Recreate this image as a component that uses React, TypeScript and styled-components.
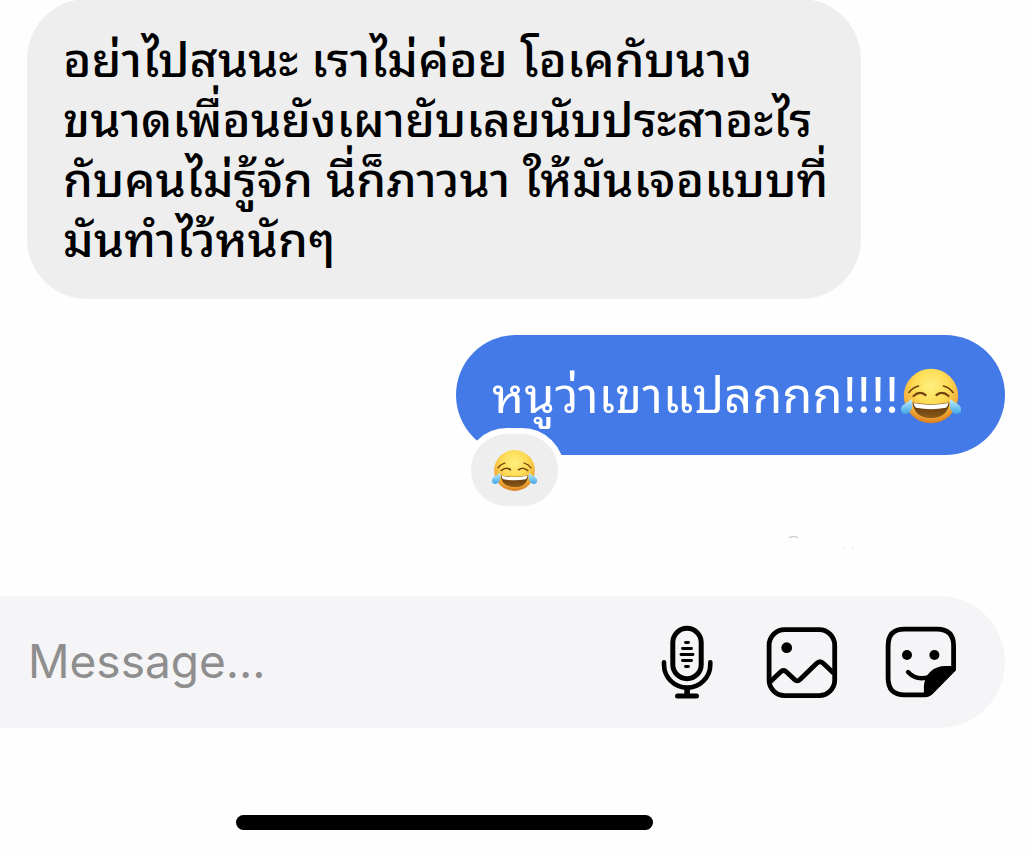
import React, { useId } from "react";
import styled, { createGlobalStyle } from "styled-components";

const GlobalStyle = createGlobalStyle`
  *, *::before, *::after { box-sizing: border-box; }
  body {
    margin: 0;
    background: #fefefe;
    color: #000;
    font-family: Inter, "Noto Sans Thai Looped", Loma, Garuda, Waree, Umpush, "Droid Sans Thai", Thonburi, Norasi, Kinnari, "Tlwg Typo", FreeSans, FreeSerif, Unifont, sans-serif;
    overflow-x: hidden;
  }
`;

const Screen = styled.main`
  display: flex;
  flex-direction: column;
  min-height: 100vh;
`;

const Thread = styled.section`
  display: flex;
  flex-direction: column;
  gap: 36px;
  margin-top: -1px;
  padding: 0 24px 0 27px;
`;

const Bubble = styled.div<{ $own?: boolean }>`
  position: relative;
  align-self: ${(p) => (p.$own ? "flex-end" : "flex-start")};
  width: ${(p) => (p.$own ? "549px" : "834px")};
  max-width: 100%;
  padding: 31px 36px 29px;
  border-radius: 60px;
  background: ${(p) => (p.$own ? "#437ae7" : "#eeeeee")};
  color: ${(p) => (p.$own ? "#fff" : "#000")};
  font-size: ${(p) => (p.$own ? "49px" : "48px")};
  font-weight: ${(p) => (p.$own ? 400 : 500)};
`;

const MessageText = styled.p`
  display: flex;
  align-items: center;
  margin: 0;
  gap: 2px;
  line-height: 60px;
  white-space: nowrap;
`;

const Reaction = styled.button`
  position: absolute;
  left: 9px;
  bottom: -57px;
  display: grid;
  place-items: center;
  width: 99px;
  height: 84px;
  padding: 0;
  border: 6px solid #fefefe;
  border-radius: 42px;
  background: #eeeeee;
`;

const Status = styled.div`
  display: flex;
  justify-content: flex-end;
  height: 141px;
  padding: 80px 168px 0 0;
`;

const Composer = styled.form`
  display: flex;
  align-items: center;
  height: 132px;
  margin-right: 24px;
  padding: 0 46px 0 28px;
  border-radius: 0 66px 66px 0;
  background: #f5f5f7;
`;

const MessageInput = styled.input`
  flex: 1;
  min-width: 0;
  padding: 0 0 2px;
  border: 0;
  outline: 0;
  background: transparent;
  font-family: Inter, sans-serif;
  font-size: 46px;
  line-height: 60px;
  color: #000;
  &::placeholder { color: #8e8e8e; opacity: 1; }
`;

const Actions = styled.div`
  display: flex;
  gap: 37px;
`;

const IconButton = styled.button`
  display: grid;
  place-items: center;
  width: 80px;
  height: 80px;
  padding: 0;
  border: 0;
  background: transparent;
  color: #000;
`;

const HomeIndicator = styled.div`
  width: 417px;
  height: 15px;
  margin: 87px 0 24px 236px;
  border-radius: 8px;
  background: #000;
`;

function JoyEmoji({ size }: { size: number }) {
  const id = useId();
  return (
    <svg width={size} height={size} viewBox="0 0 60 60" role="img" aria-label="😂">
      <defs>
        <radialGradient id={`${id}f`} cx="50%" cy="32%" r="70%">
          <stop offset="0" stopColor="#fff080" />
          <stop offset="0.45" stopColor="#fddc55" />
          <stop offset="0.75" stopColor="#f4b23c" />
          <stop offset="1" stopColor="#d6761c" />
        </radialGradient>
        <linearGradient id={`${id}m`} x1="0" y1="0" x2="0" y2="1">
          <stop offset="0" stopColor="#5c330c" />
          <stop offset="1" stopColor="#8a5a18" />
        </linearGradient>
        <linearGradient id={`${id}t`} x1="0" y1="0" x2="0" y2="1">
          <stop offset="0" stopColor="#c4f0fc" />
          <stop offset="1" stopColor="#3fa4e8" />
        </linearGradient>
      </defs>
      <circle cx="30" cy="30" r="27.200" fill={`url(#${id}f)`} />
      <path d="M8 26.500 Q11.500 21.500 17.500 20 M52 26.500 Q48.500 21.500 42.500 20" fill="none" stroke="#70400d" strokeWidth="1.600" strokeLinecap="round" />
      <path d="M12.500 30 Q18.500 24.500 24.500 29 M35.500 29 Q41.500 24.500 47.500 30" fill="none" stroke="#70400d" strokeWidth="2.200" strokeLinecap="round" />
      <path d="M11.500 36.500 Q30 40 48.500 36.500 Q46.500 52 30 52 Q13.500 52 11.500 36.500Z" fill={`url(#${id}m)`} />
      <path d="M12.500 37 Q30 40.500 47.500 37 Q47 40.500 45 41.800 Q30 44.500 15 41.800 Q13 40.500 12.500 37Z" fill="#fff" />
      <path d="M10.500 33 C12.500 39 11 46 5.500 48 C0 49 -2 43 1.500 39.500 C4.500 36.500 8 36 10.500 33Z" fill={`url(#${id}t)`} />
      <path d="M49.500 33 C47.500 39 49 46 54.500 48 C60 49 62 43 58.500 39.500 C55.500 36.500 52 36 49.500 33Z" fill={`url(#${id}t)`} />
    </svg>
  );
}

const MicIcon = () => (
  <svg width="80" height="80" viewBox="0 0 80 80" fill="none" stroke="currentColor" strokeLinecap="round">
    <rect x="27.800" y="6.300" width="28.400" height="50.400" rx="14.200" strokeWidth="5" />
    <path d="M19 40.200 V42.500 A23 23 0 0 0 65.300 42.500 V40.200" strokeWidth="4.600" />
    <path d="M42.100 65 V74" strokeWidth="5.600" strokeLinecap="butt" />
    <path d="M32.500 74 H51.500" strokeWidth="5" />
    <path d="M40.500 20.500 H43.500 M37.500 26.500 H46.500 M36 32.500 H48 M37.500 38.500 H46.500 M40.500 44.500 H43.500" strokeWidth="2.900" />
  </svg>
);

const ImageIcon = () => (
  <svg width="80" height="80" viewBox="0 0 80 80" fill="none" stroke="currentColor" strokeWidth="4.800">
    <rect x="7.100" y="7.700" width="65.600" height="65.900" rx="15.500" />
    <path d="M8 60 L18.500 50 Q21.500 47 24.500 50 L32.500 57.500 Q35.200 60.300 38 57.500 L54.500 41.500 Q58 38 61.500 41.500 L72 51.500" />
    <circle cx="24.700" cy="25.700" r="5.400" fill="currentColor" stroke="none" />
  </svg>
);

const StickerIcon = () => (
  <svg width="80" height="80" viewBox="0 0 80 80" fill="none" stroke="currentColor" strokeWidth="4.800" strokeLinejoin="round">
    <path d="M25.500 7.200 H58 Q74.600 7.200 74.600 24 V47 L51.500 70.500 Q49.500 72.800 46 72.800 H25.500 Q9.100 72.800 9.100 56 V24 Q9.100 7.200 25.500 7.200Z" />
    <path d="M74.600 46.500 H67 C55 46.500 47.500 54 47.300 65 V72 Q49.500 72.500 51.500 70.500 L74.600 47Z" fill="currentColor" />
    <path d="M29 50 Q38 59.500 51 54.500" strokeWidth="4.400" strokeLinecap="round" />
    <circle cx="28" cy="33" r="5" fill="currentColor" stroke="none" />
    <circle cx="55.400" cy="33" r="5" fill="currentColor" stroke="none" />
  </svg>
);

export default function App() {
  return (
    <>
      <GlobalStyle />
      <Screen>
        <Thread aria-label="Messages">
          <Bubble>
            <MessageText>
              <span>
                อย่าไปสนนะ เราไม่ค่อย โอเคกับนาง<br />
                ขนาดเพื่อนยังเผายับเลยนับประสาอะไร<br />
                กับคนไม่รู้จัก นี่ก็ภาวนา ให้มันเจอแบบที่<br />
                มันทำไว้หนักๆ
              </span>
            </MessageText>
          </Bubble>
          <Bubble $own>
            <MessageText>
              <span>หนูว่าเขาแปลกกก!!!!</span>
              <JoyEmoji size={60} />
            </MessageText>
            <Reaction type="button" aria-label="Reactions">
              <JoyEmoji size={45} />
            </Reaction>
          </Bubble>
        </Thread>
        <Status aria-hidden="true">
          <svg width="76" height="16" viewBox="0 0 76 16" fill="none">
            <path d="M4 2.500 Q8 0.500 13 2.500" stroke="#bbb" />
            <path d="M58 13.500 H60 M67 13.500 H69" stroke="#e4e4e4" />
          </svg>
        </Status>
        <Composer onSubmit={(e) => e.preventDefault()}>
          <MessageInput type="text" aria-label="Message" placeholder="Message..." />
          <Actions>
            <IconButton type="button" aria-label="Record voice message"><MicIcon /></IconButton>
            <IconButton type="button" aria-label="Choose photo"><ImageIcon /></IconButton>
            <IconButton type="button" aria-label="Choose sticker"><StickerIcon /></IconButton>
          </Actions>
        </Composer>
        <HomeIndicator />
      </Screen>
    </>
  );
}
